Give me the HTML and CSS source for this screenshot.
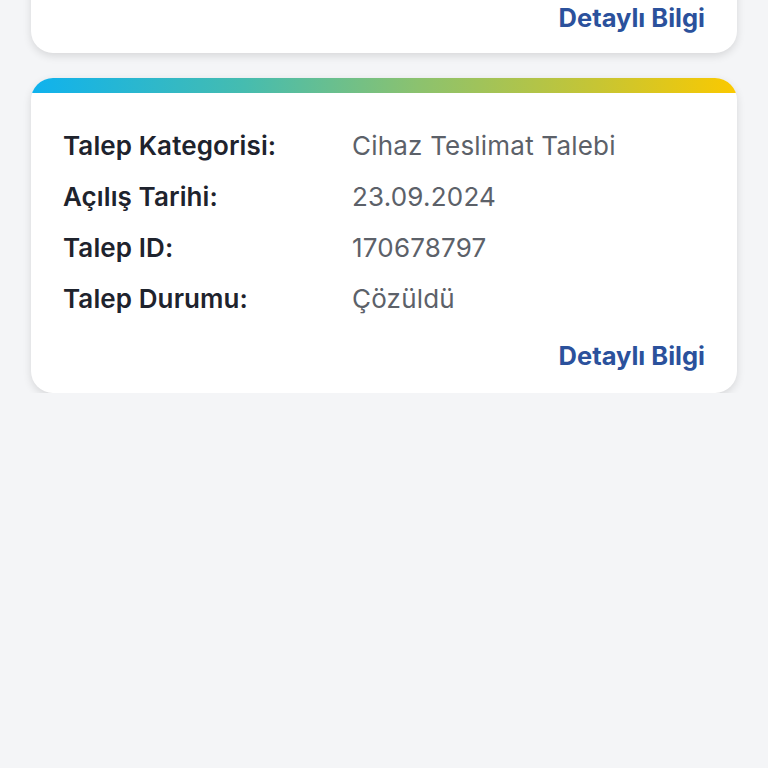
FILE: index.html
```html
<!DOCTYPE html>
<html lang="tr">
<head>
<meta charset="utf-8">
<link rel="stylesheet" href="styles.css">
</head>
<body>
<div class="list">
  <div class="card card-prev">
    <div class="card-foot"><a class="link">Detaylı Bilgi</a></div>
  </div>
  <div class="card">
    <div class="bar"></div>
    <div class="rows">
      <div class="label">Talep Kategorisi:</div><div class="value">Cihaz Teslimat Talebi</div>
      <div class="label">Açılış Tarihi:</div><div class="value">23.09.2024</div>
      <div class="label">Talep ID:</div><div class="value">170678797</div>
      <div class="label">Talep Durumu:</div><div class="value">Çözüldü</div>
    </div>
    <div class="card-foot"><a class="link">Detaylı Bilgi</a></div>
  </div>
</div>
</body>
</html>
```
FILE: styles.css
```css
html, body {
  margin: 0;
  padding: 0;
  background: #f4f5f7;
  font-family: "Inter", "Lato", sans-serif;
}
.list {
  display: flex;
  flex-direction: column;
  gap: 25px;
  padding: 0 31px;
  margin-top: -57px;
}
.card {
  background: #fff;
  border-radius: 22px;
  box-shadow: 0 3px 8px rgba(0, 0, 0, 0.12);
  overflow: hidden;
}
.card-prev {
  padding-top: 60px;
}
.bar {
  height: 15px;
  background: linear-gradient(90deg, #0fb2ee 0%, #45bcb0 30%, #8cc26e 55%, #c6c534 80%, #fbc900 100%);
}
.rows {
  display: grid;
  grid-template-columns: 289px 1fr;
  row-gap: 20px;
  padding: 37px 32px 0 32px;
  line-height: 31px;
  font-size: 26px;
}
.label {
  font-weight: 600;
  color: #1e232d;
  letter-spacing: 0.1px;
}
.value {
  font-weight: 400;
  color: #5c6169;
  letter-spacing: 0.2px;
}
.card-foot {
  display: flex;
  justify-content: flex-end;
  padding: 27px 32px 22px;
}
.card-prev .card-foot {
  padding-top: 0;
  padding-bottom: 20px;
}
.link {
  font-size: 25.5px;
  font-weight: 700;
  color: #2b519c;
  line-height: 30px;
}
```
